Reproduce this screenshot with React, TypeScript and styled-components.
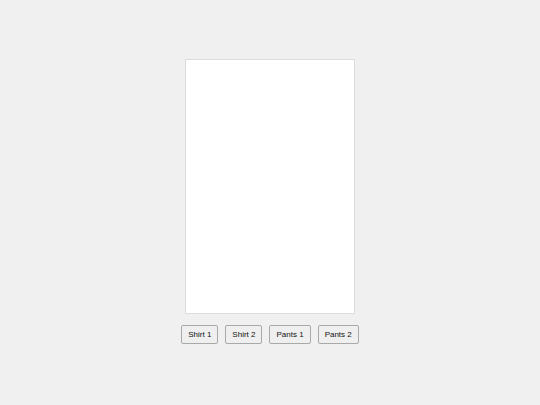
import React from "react";
import styled, { createGlobalStyle } from "styled-components";

const GlobalStyle = createGlobalStyle`
  html, body {
    margin: 0;
    padding: 0;
    background: #f0f0f0;
    font-family: "Liberation Sans", Arial, sans-serif;
  }
`;

const Page = styled.div`
  display: flex;
  flex-direction: column;
  align-items: center;
  padding-top: 59px;
`;

const Canvas = styled.div`
  width: 168px;
  height: 253px;
  background: #ffffff;
  border: 1px solid #dcdcdc;
`;

const Toolbar = styled.div`
  display: flex;
  gap: 7px;
  margin-top: 11px;
`;

const Button = styled.button`
  height: 19px;
  padding: 0 6px;
  font-family: "Liberation Sans", Arial, sans-serif;
  font-size: 8px;
  color: #111;
  background: #efefef;
  border: 1px solid #a9a9a9;
  border-radius: 2px;
  cursor: pointer;
`;

const items = ["Shirt 1", "Shirt 2", "Pants 1", "Pants 2"];

const App = () => {
  return (
    <>
      <GlobalStyle />
      <Page>
        <Canvas />
        <Toolbar>
          {items.map((label) => (
            <Button key={label}>{label}</Button>
          ))}
        </Toolbar>
      </Page>
    </>
  );
};

export default App;
